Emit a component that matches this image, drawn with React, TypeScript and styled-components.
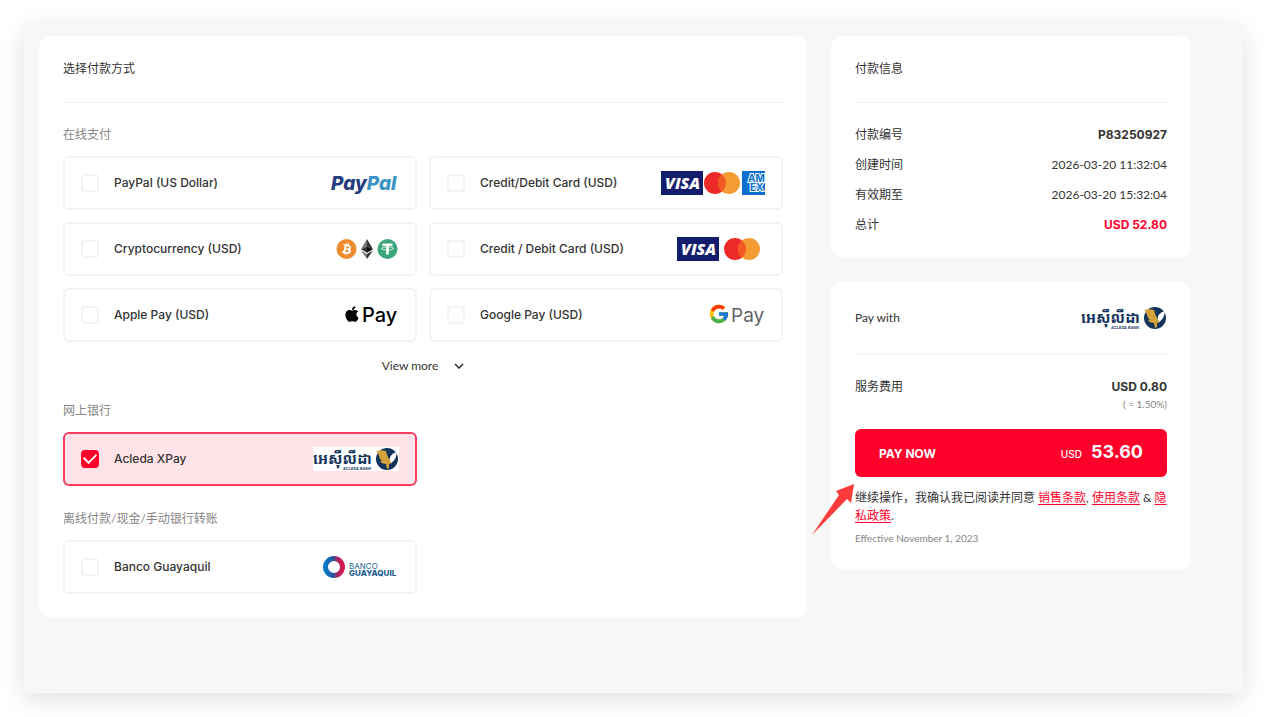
import React, { useState } from 'react';
import styled, { createGlobalStyle } from 'styled-components';
import { FcGoogle } from 'react-icons/fc';
import { FaApple, FaBtc } from 'react-icons/fa';

const GlobalStyle = createGlobalStyle`
  * { box-sizing: border-box; }
  body {
    margin: 0;
    background: #fff;
    color: #333;
    font-family: Lato, "Noto Sans CJK SC", sans-serif;
    font-size: 12px;
    line-height: 18px;
  }
`;

const Page = styled.main`
  display: grid;
  grid-template-columns: minmax(0, 1fr) 360px;
  align-items: start;
  gap: 24px;
  margin: 24px;
  padding: 12px 52px 75px 15px;
  background: #f7f7f7;
  box-shadow: 0 6px 24px rgba(0, 0, 0, 0.12);
`;

const Card = styled.section`
  padding: 24px;
  border-radius: 12px;
  background: #fff;
`;

const Sidebar = styled.aside`
  display: flex;
  flex-direction: column;
  gap: 24px;
`;

const CardHeader = styled.header`
  display: flex;
  align-items: center;
  justify-content: space-between;
  padding-bottom: 24px;
  margin-bottom: 23px;
  border-bottom: 1px solid #f1f1f1;
`;

const CardTitle = styled.h2`
  margin: 0;
  font-size: 12px;
  font-weight: 400;
`;

const Groups = styled.div`
  display: flex;
  flex-direction: column;
  gap: 24px;
`;

const Group = styled.fieldset`
  margin: 0;
  padding: 0;
  border: 0;
  min-width: 0;
`;

const GroupTitle = styled.legend`
  padding: 0;
  margin-bottom: 12px;
  color: #858585;
`;

const MethodGrid = styled.div`
  display: grid;
  grid-template-columns: repeat(2, minmax(0, 1fr));
  gap: 12px;
`;

const Method = styled.label<{ $selected: boolean }>`
  display: flex;
  align-items: center;
  height: 54px;
  padding: 0 16px;
  border: 2px solid ${(p) => (p.$selected ? '#fd3d5f' : '#f3f3f3')};
  border-radius: 6px;
  background: ${(p) => (p.$selected ? '#ffe3e8' : '#fff')};
  cursor: pointer;
`;

const Checkbox = styled.input`
  appearance: none;
  display: grid;
  place-items: center;
  flex: none;
  width: 18px;
  height: 18px;
  margin: 0 15px 0 0;
  border: 2px solid #f3f3f3;
  border-radius: 4px;
  background: #fff;

  &:checked {
    border-color: #ff002b;
    background: #ff002b;
  }

  &:checked::after {
    content: '';
    width: 10px;
    height: 6px;
    margin-bottom: 4px;
    border: solid #fff;
    border-width: 0 0 2px 2px;
    transform: rotate(-45deg);
  }
`;

const MethodName = styled.span`
  flex: 1;
  font-family: Inter, "Noto Sans CJK SC", sans-serif;
  font-weight: 500;
`;

const Logo = styled.svg`
  display: block;
  flex: none;
`;

const MoreButton = styled.button`
  display: flex;
  align-items: center;
  gap: 16px;
  height: 24px;
  margin: 12px auto 0;
  padding: 0;
  border: 0;
  background: none;
  color: #333;
  font: inherit;
  cursor: pointer;
`;

const Details = styled.dl`
  display: flex;
  flex-direction: column;
  gap: 12px;
  margin: 0;
`;

const DetailRow = styled.div`
  display: flex;
  justify-content: space-between;
`;

const Term = styled.dt`
  margin: 0;
`;

const Value = styled.dd<{ $bold?: boolean; $accent?: boolean }>`
  margin: 0;
  text-align: right;
  font-family: ${(p) => (p.$bold ? 'Inter' : 'Lato')}, sans-serif;
  font-weight: ${(p) => (p.$bold ? 700 : 400)};
  color: ${(p) => (p.$accent ? '#ff002b' : 'inherit')};
`;

const Rate = styled.small`
  display: block;
  color: #858585;
  font-family: Lato, sans-serif;
  font-size: 10px;
  font-weight: 400;
  line-height: 16px;
`;

const PayArea = styled.div`
  position: relative;
  margin-top: 17px;
`;

const PayButton = styled.button`
  display: flex;
  align-items: center;
  justify-content: space-between;
  width: 100%;
  height: 48px;
  padding: 0 24px;
  border: 0;
  border-radius: 6px;
  background: #ff002b;
  color: #fff;
  font-family: Inter, sans-serif;
  font-size: 12px;
  font-weight: 700;
  cursor: pointer;
`;

const Amount = styled.span`
  display: flex;
  align-items: baseline;
  gap: 9px;
  font-size: 18px;
  line-height: 24px;
`;

const Currency = styled.span`
  font-size: 10px;
  font-weight: 500;
`;

const Pointer = styled.svg`
  position: absolute;
  left: -44px;
  top: 54px;
  pointer-events: none;
`;

const Legal = styled.p`
  margin: 12px 0 5px;
`;

const LegalLink = styled.a`
  color: #ff002b;
  text-decoration: underline;
  text-underline-offset: 2px;
`;

const Effective = styled.p`
  margin: 0;
  color: #858585;
  font-size: 10px;
  line-height: 16px;
`;

function PayPalLogo() {
  return (
    <Logo width="68" height="24" viewBox="0 0 68 24" role="img" aria-label="PayPal">
      <text x="0" y="19" fontFamily="Inter" fontSize="19" fontWeight="800" fontStyle="italic" fill="#253b80">
        Pay<tspan fill="#3b93c4">Pal</tspan>
      </text>
    </Logo>
  );
}

function Visa() {
  return (
    <>
      <rect width="42" height="24" fill="#141c6c" />
      <text x="4" y="18" fontFamily="Open Sans" fontSize="16" fontWeight="800" fontStyle="italic" fill="#fff">
        VISA
      </text>
    </>
  );
}

function Mastercard() {
  return (
    <>
      <circle cx="11" cy="12" r="11" fill="#ee2a28" />
      <circle cx="25" cy="12" r="11" fill="#f59b34" />
      <path d="M18 3.500a11 11 0 0 1 0 17a11 11 0 0 1 0-17z" fill="#f15a24" />
    </>
  );
}

function CardsLogo() {
  return (
    <Logo width="104" height="24" viewBox="0 0 104 24" role="img" aria-label="Visa, Mastercard, American Express">
      <Visa />
      <g transform="translate(43 0)"><Mastercard /></g>
      <g transform="translate(81 0)">
        <rect width="23" height="24" fill="#0b6fd0" />
        <g fontFamily="Inter" fontSize="10" fontWeight="700" fill="#0b6fd0" stroke="#fff" strokeWidth="2" paintOrder="stroke">
          <text x="6" y="11">AM</text>
          <text x="8" y="20">EX</text>
        </g>
      </g>
    </Logo>
  );
}

function VisaMastercardLogo() {
  return (
    <Logo width="88" height="24" viewBox="0 0 88 24" role="img" aria-label="Visa, Mastercard">
      <Visa />
      <g transform="translate(47 0)"><Mastercard /></g>
    </Logo>
  );
}

function CryptoLogo() {
  return (
    <Logo width="63" height="24" viewBox="0 0 63 24" role="img" aria-label="Bitcoin, Ethereum, Tether">
      <circle cx="10.500" cy="12" r="10" fill="#ee8b2d" />
      <g transform="rotate(13 10.500 12)">
        <FaBtc x={5} y={6} size={12} color="#fff" />
      </g>
      <path d="M31 2l-6 10.200 6-2.700z" fill="#777" />
      <path d="M31 2l6 10.200-6-2.700z" fill="#333" />
      <path d="M31 9.500l-6 2.700 6 3.500z" fill="#333" />
      <path d="M31 9.500l6 2.700-6 3.500z" fill="#111" />
      <path d="M25 13.500l6 3.500v5z" fill="#777" />
      <path d="M37 13.500l-6 3.500v5z" fill="#333" />
      <circle cx="51.500" cy="12" r="10" fill="#3ba57c" />
      <path d="M46.500 6.500h10v2.500h-3.700v8.500h-2.600V9h-3.700z" fill="#fff" />
      <ellipse cx="51.500" cy="11.500" rx="6" ry="1.500" fill="none" stroke="#fff" strokeWidth="0.800" />
    </Logo>
  );
}

function ApplePayLogo() {
  return (
    <Logo width="55" height="24" viewBox="0 0 55 24" role="img" aria-label="Apple Pay">
      <FaApple x={-1} y={2} size={18} color="#000" />
      <text x="18" y="19" fontFamily="Inter" fontSize="20" fontWeight="500" fill="#000">Pay</text>
    </Logo>
  );
}

function GooglePayLogo() {
  return (
    <Logo width="56" height="24" viewBox="0 0 56 24" role="img" aria-label="Google Pay">
      <FcGoogle x={-1} y={0} size={22} />
      <text x="22" y="19" fontFamily="Inter" fontSize="19" fill="#5f6368">Pay</text>
    </Logo>
  );
}

function AcledaLogo() {
  return (
    <Logo width="86" height="24" viewBox="0 0 86 24" role="img" aria-label="Acleda Bank">
      <rect width="86" height="24" fill="#fff" />
      <text x="0" y="17" fontFamily="Noto Sans Khmer, Khmer OS, Noto Sans, sans-serif" fontSize="15" fontWeight="700" fill="#14345c">
        អេស៊ីលីដា
      </text>
      <text x="30" y="23" fontFamily="Inter" fontSize="4" fontWeight="600" fill="#14345c">ACLEDA BANK</text>
      <circle cx="74" cy="12" r="11" fill="#14345c" />
      <path d="M63 4c4-1 7-1 10 0 1 4 2 7 4 9 1 1 2 1 2 3l-3 1v4l-2 1-1-5c-3 0-5-1-6-3h2c-4-3-2-7-6-10z" fill="#d3a33b" />
      <path d="M77 13c-1-4 3-7 7-8-1 4-1 8-6 11z" fill="#fff" />
    </Logo>
  );
}

function GuayaquilLogo() {
  return (
    <Logo width="77" height="24" viewBox="0 0 77 24" role="img" aria-label="Banco Guayaquil">
      <defs>
        <linearGradient id="ring" x1="0" y1="0" x2="1" y2="0">
          <stop offset="0" stopColor="#0879c9" />
          <stop offset="0.450" stopColor="#26539b" />
          <stop offset="0.700" stopColor="#a82561" />
          <stop offset="1" stopColor="#d2184e" />
        </linearGradient>
      </defs>
      <circle cx="12" cy="12" r="8.500" fill="none" stroke="url(#ring)" strokeWidth="5" />
      <g fontFamily="Inter" fontSize="8" fill="#1c5f94">
        <text x="27" y="14">BANCO</text>
        <text x="27" y="21" fontWeight="800">GUAYAQUIL</text>
      </g>
    </Logo>
  );
}

interface PaymentMethod {
  id: string;
  name: string;
  logo: React.ReactNode;
}

const online: PaymentMethod[] = [
  { id: 'paypal', name: 'PayPal (US Dollar)', logo: <PayPalLogo /> },
  { id: 'cards', name: 'Credit/Debit Card (USD)', logo: <CardsLogo /> },
  { id: 'crypto', name: 'Cryptocurrency (USD)', logo: <CryptoLogo /> },
  { id: 'visa-mc', name: 'Credit / Debit Card (USD)', logo: <VisaMastercardLogo /> },
  { id: 'apple', name: 'Apple Pay (USD)', logo: <ApplePayLogo /> },
  { id: 'google', name: 'Google Pay (USD)', logo: <GooglePayLogo /> },
];
const banking: PaymentMethod[] = [{ id: 'acleda', name: 'Acleda XPay', logo: <AcledaLogo /> }];
const offline: PaymentMethod[] = [{ id: 'guayaquil', name: 'Banco Guayaquil', logo: <GuayaquilLogo /> }];

interface MethodGroupProps {
  title: string;
  methods: PaymentMethod[];
  selected: string;
  onSelect: (id: string) => void;
  children?: React.ReactNode;
}

function MethodGroup({ title, methods, selected, onSelect, children }: MethodGroupProps) {
  return (
    <Group>
      <GroupTitle>{title}</GroupTitle>
      <MethodGrid>
        {methods.map((m) => (
          <Method key={m.id} $selected={m.id === selected}>
            <Checkbox type="checkbox" checked={m.id === selected} onChange={() => onSelect(m.id)} />
            <MethodName>{m.name}</MethodName>
            {m.logo}
          </Method>
        ))}
      </MethodGrid>
      {children}
    </Group>
  );
}

export default function App() {
  const [selected, setSelected] = useState('acleda');
  return (
    <>
      <GlobalStyle />
      <Page>
        <Card>
          <CardHeader>
            <CardTitle>选择付款方式</CardTitle>
          </CardHeader>
          <Groups>
            <MethodGroup title="在线支付" methods={online} selected={selected} onSelect={setSelected}>
              <MoreButton type="button">
                View more
                <Logo width="10" height="6" viewBox="0 0 10 6" aria-hidden="true">
                  <path d="M1 1l4 4 4-4" fill="none" stroke="#333" strokeWidth="1.600" />
                </Logo>
              </MoreButton>
            </MethodGroup>
            <MethodGroup title="网上银行" methods={banking} selected={selected} onSelect={setSelected} />
            <MethodGroup title="离线付款/现金/手动银行转账" methods={offline} selected={selected} onSelect={setSelected} />
          </Groups>
        </Card>
        <Sidebar>
          <Card>
            <CardHeader>
              <CardTitle>付款信息</CardTitle>
            </CardHeader>
            <Details>
              <DetailRow><Term>付款编号</Term><Value $bold>P83250927</Value></DetailRow>
              <DetailRow><Term>创建时间</Term><Value>2026-03-20 11:32:04</Value></DetailRow>
              <DetailRow><Term>有效期至</Term><Value>2026-03-20 15:32:04</Value></DetailRow>
              <DetailRow><Term>总计</Term><Value $bold $accent>USD 52.80</Value></DetailRow>
            </Details>
          </Card>
          <Card>
            <CardHeader>
              <CardTitle>Pay with</CardTitle>
              <AcledaLogo />
            </CardHeader>
            <Details>
              <DetailRow>
                <Term>服务费用</Term>
                <Value $bold>USD 0.80<Rate>( = 1.50%)</Rate></Value>
              </DetailRow>
            </Details>
            <PayArea>
              <PayButton type="button">
                PAY NOW
                <Amount><Currency>USD</Currency>53.60</Amount>
              </PayButton>
              <Pointer width="44" height="54" viewBox="0 0 44 54" aria-hidden="true">
                <path d="M43 1L25 8l3 4L1 52l35-36 4 4z" fill="#ff3b3b" />
              </Pointer>
            </PayArea>
            <Legal>
              继续操作，我确认我已阅读并同意 <LegalLink href="#sales">销售条款</LegalLink>, <LegalLink href="#use">使用条款</LegalLink> &amp; <LegalLink href="#privacy">隐私政策</LegalLink>.
            </Legal>
            <Effective>Effective November 1, 2023</Effective>
          </Card>
        </Sidebar>
      </Page>
    </>
  );
}
